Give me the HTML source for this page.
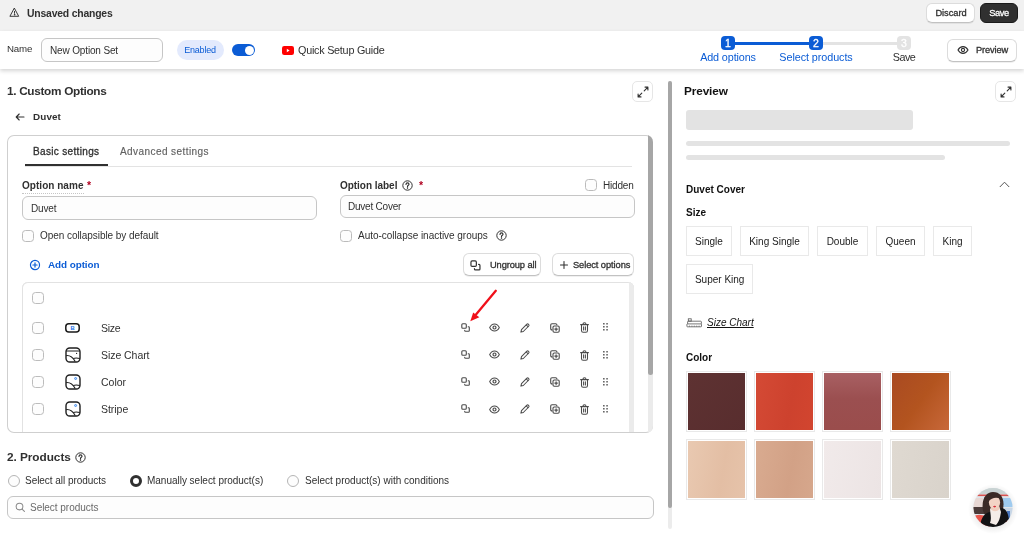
<!DOCTYPE html>
<html lang="en">
<head>
<meta charset="utf-8">
<title>New Option Set</title>
<style>
*{box-sizing:border-box;margin:0;padding:0}
html,body{width:1024px;height:540px;overflow:hidden;background:#fff}
body{font-family:"Liberation Sans",sans-serif;color:#303030;font-size:11px;position:relative}
.abs{position:absolute}
.t{position:absolute;white-space:nowrap;line-height:14px;will-change:transform}
.b{font-weight:700}
.m{-webkit-text-stroke:.3px currentColor}
#topbar{left:0;top:0;width:1024px;height:31px;background:#f1f1f1}
#bar2{left:0;top:31px;width:1024px;height:38px;background:#fff;box-shadow:0 1.5px 4px rgba(0,0,0,.17)}
.btn{position:absolute;background:#fff;border:1px solid #dcdcdc;border-bottom-color:#c2c2c2;border-radius:6px;box-shadow:0 1px 0 rgba(0,0,0,.06)}
.inp{position:absolute;background:#fdfdfd;border:1px solid #c6c6c6;border-radius:6px}
.cb{position:absolute;width:12px;height:12px;border:1px solid #bbb;border-radius:3.5px;background:#fdfdfd}
.radio{position:absolute;width:12px;height:12px;border:1px solid #b5b5b5;border-radius:50%;background:#fdfdfd}
.sw{position:absolute;width:60.8px;height:60.8px;border:1px solid #e9e9e9;padding:1.2px;background:#fff}
.sw i{display:block;width:100%;height:100%}
.opt{position:absolute;height:29.6px;border:1px solid #e9e9e9;background:#fff;font-size:10px;line-height:29.4px;text-align:center;color:#222}
.opt span{display:block;will-change:transform}
.ico{position:absolute}
</style>
</head>
<body>
<!-- top bar -->
<div class="abs" id="topbar"></div>
<svg class="ico" style="left:8.5px;top:7.2px" width="11" height="11" viewBox="0 0 11 11" fill="none" stroke="#303030" stroke-width=".95" stroke-linejoin="round" stroke-linecap="round"><path d="M5.5 1.4 L9.7 9.3 H1.3 Z"/><path d="M5.5 4.4 V6.3"/><circle cx="5.5" cy="7.8" r=".3" fill="#303030"/></svg>
<div class="t b" style="left:27px;top:6.6px;font-size:10.4px;--w:85.5;letter-spacing:-0.191px">Unsaved changes</div>
<div class="btn" style="left:925.8px;top:3.4px;width:48.8px;height:19.6px"></div>
<div class="t m" style="left:926.6px;top:6.2px;width:48px;text-align:center;font-size:9.3px;--w:31.2;letter-spacing:-0.045px">Discard</div>
<div class="abs" style="left:980px;top:3px;width:38px;height:19.5px;background:#303030;border-radius:6px;border:1px solid #1a1a1a"></div>
<div class="t m" style="left:980px;top:6px;width:38px;text-align:center;font-size:9.3px;color:#fff;--w:19.5;letter-spacing:-0.426px">Save</div>

<!-- second bar -->
<div class="abs" id="bar2"></div>
<div class="t" style="left:7px;top:42px;font-size:9.7px;--w:25.3;letter-spacing:-0.136px">Name</div>
<div class="inp" style="left:41px;top:38px;width:122px;height:24px"></div>
<div class="t" style="left:50px;top:43.6px;font-size:10px;--w:68;letter-spacing:-0.146px">New Option Set</div>
<div class="abs" style="left:177.3px;top:40px;width:46.5px;height:20px;border-radius:10px;background:#e3eafd"></div>
<div class="t" style="left:177px;top:43px;width:46px;text-align:center;font-size:9px;color:#0b5cd5;--w:31.7;letter-spacing:-0.190px">Enabled</div>
<div class="abs" style="left:232.4px;top:44.2px;width:22.8px;height:11.6px;border-radius:6px;background:#0b5cd5"></div>
<div class="abs" style="left:244.6px;top:45.5px;width:9px;height:9px;border-radius:50%;background:#fff"></div>
<svg class="ico" style="left:282px;top:46px" width="12" height="9" viewBox="0 0 12 9"><rect width="12" height="9" rx="2.2" fill="#f00"/><path d="M4.8 2.7 L7.6 4.5 L4.8 6.3 Z" fill="#fff"/></svg>
<div class="t" style="left:298px;top:43px;font-size:10.8px;--w:86.5;letter-spacing:-0.243px">Quick Setup Guide</div>

<!-- stepper -->
<div class="abs" style="left:728px;top:42px;width:88px;height:3px;background:#0b5cd5"></div>
<div class="abs" style="left:816px;top:42px;width:88px;height:3px;background:#e3e3e3"></div>
<div class="abs" style="left:721px;top:36px;width:14px;height:14px;border-radius:4px;background:#0b5cd5"></div>
<div class="abs" style="left:809px;top:36px;width:14px;height:14px;border-radius:4px;background:#0b5cd5"></div>
<div class="abs" style="left:897px;top:36px;width:14px;height:14px;border-radius:4px;background:#e3e3e3"></div>
<div class="t m" style="left:721px;top:36px;width:14px;text-align:center;font-size:10.5px;color:#fff">1</div>
<div class="t m" style="left:809px;top:36px;width:14px;text-align:center;font-size:10.5px;color:#fff">2</div>
<div class="t m" style="left:897px;top:36px;width:14px;text-align:center;font-size:10.5px;color:#fff">3</div>
<div class="t" style="left:678px;top:50px;width:100px;text-align:center;font-size:10.8px;color:#0b5cd5;--w:55.7;letter-spacing:-0.121px">Add options</div>
<div class="t" style="left:766px;top:50px;width:100px;text-align:center;font-size:10.8px;color:#0b5cd5;--w:73.3;letter-spacing:-0.075px">Select products</div>
<div class="t" style="left:854px;top:50px;width:100px;text-align:center;font-size:10.8px;--w:22.5;letter-spacing:-0.527px">Save</div>
<div class="btn" style="left:947.2px;top:38.6px;width:69.6px;height:23px"></div>
<svg class="ico" style="left:957px;top:44px" width="12" height="12" viewBox="0 0 12 12" fill="none" stroke="#303030" stroke-width="1.1"><path d="M1 6 C2.3 3.6 4 2.6 6 2.6 S9.7 3.6 11 6 C9.7 8.4 8 9.4 6 9.4 S2.3 8.4 1 6Z"/><circle cx="6" cy="6" r="1.6"/></svg>
<div class="t m" style="left:976px;top:43px;font-size:9.3px;color:#303030;--w:32.2;letter-spacing:-0.125px">Preview</div>

<!-- main left -->
<div class="t b" style="left:7.4px;top:84.3px;font-size:11.8px;--w:99.5;letter-spacing:-0.316px">1. Custom Options</div>
<div class="btn" style="left:632px;top:81px;width:21px;height:21px;border-color:#e6e6e6;border-radius:5px;box-shadow:none"></div>
<svg class="ico" style="left:636.6px;top:85.7px" width="12" height="12" viewBox="0 0 12 12" fill="none" stroke="#303030" stroke-width="1.1" stroke-linecap="round" stroke-linejoin="round"><path d="M8 1.1 H10.9 V4 M10.9 1.1 L7.2 4.8 M4 10.9 H1.1 V8 M1.1 10.9 L4.8 7.2"/></svg>
<svg class="ico" style="left:14.9px;top:112.2px" width="10" height="10" viewBox="0 0 10 10" fill="none" stroke="#303030" stroke-width="1.1" stroke-linecap="round" stroke-linejoin="round"><path d="M9 5 H1.2 M4.2 2 L1.2 5 L4.2 8"/></svg>
<div class="t b" style="left:33px;top:110.4px;font-size:9.9px;--w:28;letter-spacing:0.113px">Duvet</div>

<!-- card -->
<div class="abs" id="card" style="left:7px;top:135px;width:646.2px;height:298px;border-radius:7px;background:#fff;overflow:hidden;box-shadow:inset 0 0 0 1px #cfcfcf">
  <div class="abs" style="right:0;top:0;width:5px;height:298px;background:#ebebeb"></div>
  <div class="abs" style="right:0;top:0;width:5px;height:240px;background:#a6a6a6;border-radius:0 0 2.5px 2.5px"></div>
</div>
<div class="t m" style="left:33px;top:144.6px;font-size:10px;color:#303030;--w:66.4;letter-spacing:0.335px">Basic settings</div>
<div class="t m" style="left:119.5px;top:144.6px;font-size:10px;color:#616161;-webkit-text-stroke-width:.15px;--w:89;letter-spacing:0.428px">Advanced settings</div>
<div class="abs" style="left:25px;top:166px;width:607px;height:1px;background:#e3e3e3"></div>
<div class="abs" style="left:25px;top:164px;width:83px;height:2px;background:#303030"></div>

<div class="t b" style="left:22px;top:179px;font-size:10px;--w:61.5;letter-spacing:0.034px">Option name</div>
<div class="t b" style="left:87px;top:178px;font-size:10.5px;color:#b00020">*</div>
<div class="abs" style="left:22px;top:192.6px;width:61.5px;border-top:1px dotted #c6c6c6"></div>
<div class="inp" style="left:22px;top:196.4px;width:294.8px;height:23.2px"></div>
<div class="t" style="left:30.5px;top:202px;font-size:10px;--w:25.3;letter-spacing:-0.165px">Duvet</div>
<div class="cb" style="left:22px;top:230px"></div>
<div class="t" style="left:40px;top:229px;font-size:10px;--w:118.6;letter-spacing:-0.055px">Open collapsible by default</div>

<div class="t b" style="left:340px;top:179px;font-size:10px;--w:57.4;letter-spacing:-0.032px">Option label</div>
<svg class="ico help" style="left:402px;top:180px" width="11" height="11" viewBox="0 0 11 11" fill="none" stroke="#303030" stroke-width="1"><circle cx="5.5" cy="5.5" r="4.7"/><path d="M4 4.4 C4 3.4 4.7 2.9 5.5 2.9 S7 3.4 7 4.3 C7 5.3 5.5 5.3 5.5 6.5" stroke-linecap="round" stroke-width="1.15"/><circle cx="5.5" cy="8" r=".4" fill="#303030"/></svg>
<div class="t b" style="left:419px;top:178px;font-size:10.5px;color:#b00020">*</div>
<div class="cb" style="left:585px;top:179px"></div>
<div class="t" style="left:603.4px;top:179px;font-size:10px;--w:30.6;letter-spacing:-0.184px">Hidden</div>
<div class="inp" style="left:339.5px;top:195.4px;width:295px;height:22.6px"></div>
<div class="t" style="left:348px;top:200px;font-size:10px;--w:53.1;letter-spacing:-0.225px">Duvet Cover</div>
<div class="cb" style="left:340px;top:230px"></div>
<div class="t" style="left:358px;top:229px;font-size:10px;--w:129.7;letter-spacing:-0.032px">Auto-collapse inactive groups</div>
<svg class="ico help" style="left:496px;top:230px" width="11" height="11" viewBox="0 0 11 11" fill="none" stroke="#303030" stroke-width="1"><circle cx="5.5" cy="5.5" r="4.7"/><path d="M4 4.4 C4 3.4 4.7 2.9 5.5 2.9 S7 3.4 7 4.3 C7 5.3 5.5 5.3 5.5 6.5" stroke-linecap="round" stroke-width="1.15"/><circle cx="5.5" cy="8" r=".4" fill="#303030"/></svg>

<svg class="ico" style="left:29px;top:259px" width="12" height="12" viewBox="0 0 12 12" fill="none" stroke="#0b5cd5" stroke-width="1.2" stroke-linecap="round"><circle cx="6" cy="6" r="4.55"/><path d="M6 3.9 V8.1 M3.9 6 H8.1"/></svg>
<div class="t b" style="left:48px;top:258px;font-size:9.9px;color:#0b5cd5;--w:51.5;letter-spacing:-0.061px">Add option</div>

<div class="btn" style="left:462.8px;top:253.2px;width:78px;height:22.4px"></div>
<svg class="ico" style="left:470.3px;top:260px" width="12" height="12" viewBox="0 0 10 10" fill="none" stroke="#303030" stroke-width="1" stroke-linecap="round"><rect x=".8" y=".8" width="4.5" height="4.5" rx="1"/><path d="M7.2 3.7 H7.5 Q8.3 3.7 8.3 4.5 V7.5 Q8.3 8.3 7.5 8.3 H4.5 Q3.7 8.3 3.7 7.5 V7.2"/></svg>
<div class="t m" style="left:489.8px;top:258px;font-size:9.3px;--w:46.4;letter-spacing:-0.104px">Ungroup all</div>
<div class="btn" style="left:552.2px;top:253.2px;width:82.3px;height:22.4px"></div>
<svg class="ico" style="left:559.6px;top:261.2px" width="8" height="8" viewBox="0 0 8 8" stroke="#303030" stroke-width="1.05" stroke-linecap="round"><path d="M4 .5 V7.5 M.5 4 H7.5"/></svg>
<div class="t m" style="left:572.5px;top:258px;font-size:9.3px;--w:57.3;letter-spacing:-0.079px">Select options</div>

<!-- list -->
<div class="abs" id="list" style="left:22px;top:282px;width:612px;height:150px;border-radius:6px 6px 0 0;background:#fff;overflow:hidden;box-shadow:inset 0 1px 0 #e2e2e2,inset 1px 0 0 #e2e2e2,inset -1px 0 0 #e2e2e2">
  <div class="abs" style="right:0;top:0;width:5px;height:151px;background:#ebebeb"></div>
</div>

<!-- rows -->
<div class="cb" style="left:32px;top:291.5px;border-color:#bcbcbc"></div>
<div class="cb" style="left:32px;top:322.0px;border-color:#bcbcbc"></div>
<svg class="ico" style="left:65px;top:323.1px" width="15" height="10" viewBox="0 0 15 10"><rect x=".8" y=".8" width="13.4" height="8.2" rx="3" fill="#fff" stroke="#1a1a1a" stroke-width="1.5"/><text x="7.5" y="7" font-family="Liberation Sans,sans-serif" font-weight="700" font-size="5.8" fill="#1a73e8" text-anchor="middle">B</text></svg>
<div class="t" style="left:101px;top:320.8px;font-size:10.5px;--w:19.4;letter-spacing:-0.259px">Size</div>
<svg class="ico" style="left:460.5px;top:323.2px" width="10" height="10" viewBox="0 0 10 10" fill="none" stroke="#4a4a4a" stroke-width="1.1" stroke-linecap="round"><rect x=".8" y=".8" width="4.5" height="4.5" rx="1"/><path d="M7.2 3.7 H7.5 Q8.3 3.7 8.3 4.5 V7.5 Q8.3 8.3 7.5 8.3 H4.5 Q3.7 8.3 3.7 7.5 V7.2"/></svg>
<svg class="ico" style="left:489px;top:323.3px" width="11" height="9" viewBox="0 0 11 9" fill="none" stroke="#4a4a4a" stroke-width="1.05"><path d="M.7 4.5 C1.8 2.2 3.5 1 5.5 1 S9.2 2.2 10.3 4.5 C9.2 6.8 7.5 8 5.5 8 S1.8 6.8 .7 4.5Z"/><circle cx="5.5" cy="4.5" r="1.5" stroke-width="1.2"/></svg>
<svg class="ico" style="left:519.5px;top:322.8px" width="10" height="10" viewBox="0 0 10 10" fill="none" stroke="#4a4a4a" stroke-width="1.05" stroke-linejoin="round" stroke-linecap="round"><path d="M.9 9.1 L1.5 6.6 L6.9 1.2 Q7.7 .5 8.5 1.3 Q9.4 2.2 8.7 3 L3.3 8.5 Z"/><path d="M6.3 2 L8 3.7"/></svg>
<svg class="ico" style="left:549.8px;top:323.0px" width="10" height="10" viewBox="0 0 10 10" fill="none" stroke="#4a4a4a" stroke-width="1.1" stroke-linecap="round"><rect x="3" y="3" width="6.2" height="6.2" rx="1.2"/><path d="M6.1 4.8 V7.4 M4.8 6.1 H7.4" stroke-width="1.1"/><path d="M1.9 6.9 Q.7 6.9 .7 5.6 V2 Q.7 .7 2 .7 H5.6 Q6.9 .7 6.9 1.7"/></svg>
<svg class="ico" style="left:579.8px;top:322.4px" width="9" height="11" viewBox="0 0 9 11" fill="none" stroke="#4a4a4a" stroke-width="1.05" stroke-linecap="round"><path d="M.6 2.6 H8.4"/><path d="M3 2.4 Q3 .7 4.5 .7 T6 2.4"/><path d="M1.5 2.8 V8.6 Q1.5 10.3 3.1 10.3 H5.9 Q7.5 10.3 7.5 8.6 V2.8"/><path d="M3.6 4.8 V8 M5.4 4.8 V8"/></svg>
<svg class="ico" style="left:602.8px;top:323.4px" width="5" height="8" viewBox="0 0 5 8" fill="#4a4a4a"><rect x="0.1" y="0.1" width="1.5" height="1.5" rx=".3"/><rect x="0.1" y="3.1" width="1.5" height="1.5" rx=".3"/><rect x="0.1" y="6.1" width="1.5" height="1.5" rx=".3"/><rect x="3.3" y="0.1" width="1.5" height="1.5" rx=".3"/><rect x="3.3" y="3.1" width="1.5" height="1.5" rx=".3"/><rect x="3.3" y="6.1" width="1.5" height="1.5" rx=".3"/></svg>
<div class="cb" style="left:32px;top:349.1px;border-color:#bcbcbc"></div>
<svg class="ico" style="left:65px;top:346.9px" width="16" height="16" viewBox="0 0 16 16" fill="none" stroke="#1f1f1f" stroke-width="1.3"><rect x="1" y="1" width="14" height="14" rx="3.8" stroke-width="1.4"/><path d="M1.2 8.6 C5 8.2 8 10.5 10.2 14.6" stroke-width="1.1"/><path d="M8.3 11.6 C10.3 10.6 12.5 10.8 14.8 11.6" stroke-width="1.1"/><path d="M1 4 H15" stroke-width="1"/><circle cx="11.6" cy="6.4" r=".6" fill="#1f1f1f" stroke="none"/></svg>
<div class="t" style="left:101px;top:347.9px;font-size:10.5px;--w:48.5;letter-spacing:-0.053px">Size Chart</div>
<svg class="ico" style="left:460.5px;top:350.2px" width="10" height="10" viewBox="0 0 10 10" fill="none" stroke="#4a4a4a" stroke-width="1.1" stroke-linecap="round"><rect x=".8" y=".8" width="4.5" height="4.5" rx="1"/><path d="M7.2 3.7 H7.5 Q8.3 3.7 8.3 4.5 V7.5 Q8.3 8.3 7.5 8.3 H4.5 Q3.7 8.3 3.7 7.5 V7.2"/></svg>
<svg class="ico" style="left:489px;top:350.4px" width="11" height="9" viewBox="0 0 11 9" fill="none" stroke="#4a4a4a" stroke-width="1.05"><path d="M.7 4.5 C1.8 2.2 3.5 1 5.5 1 S9.2 2.2 10.3 4.5 C9.2 6.8 7.5 8 5.5 8 S1.8 6.8 .7 4.5Z"/><circle cx="5.5" cy="4.5" r="1.5" stroke-width="1.2"/></svg>
<svg class="ico" style="left:519.5px;top:349.9px" width="10" height="10" viewBox="0 0 10 10" fill="none" stroke="#4a4a4a" stroke-width="1.05" stroke-linejoin="round" stroke-linecap="round"><path d="M.9 9.1 L1.5 6.6 L6.9 1.2 Q7.7 .5 8.5 1.3 Q9.4 2.2 8.7 3 L3.3 8.5 Z"/><path d="M6.3 2 L8 3.7"/></svg>
<svg class="ico" style="left:549.8px;top:350.1px" width="10" height="10" viewBox="0 0 10 10" fill="none" stroke="#4a4a4a" stroke-width="1.1" stroke-linecap="round"><rect x="3" y="3" width="6.2" height="6.2" rx="1.2"/><path d="M6.1 4.8 V7.4 M4.8 6.1 H7.4" stroke-width="1.1"/><path d="M1.9 6.9 Q.7 6.9 .7 5.6 V2 Q.7 .7 2 .7 H5.6 Q6.9 .7 6.9 1.7"/></svg>
<svg class="ico" style="left:579.8px;top:349.5px" width="9" height="11" viewBox="0 0 9 11" fill="none" stroke="#4a4a4a" stroke-width="1.05" stroke-linecap="round"><path d="M.6 2.6 H8.4"/><path d="M3 2.4 Q3 .7 4.5 .7 T6 2.4"/><path d="M1.5 2.8 V8.6 Q1.5 10.3 3.1 10.3 H5.9 Q7.5 10.3 7.5 8.6 V2.8"/><path d="M3.6 4.8 V8 M5.4 4.8 V8"/></svg>
<svg class="ico" style="left:602.8px;top:350.5px" width="5" height="8" viewBox="0 0 5 8" fill="#4a4a4a"><rect x="0.1" y="0.1" width="1.5" height="1.5" rx=".3"/><rect x="0.1" y="3.1" width="1.5" height="1.5" rx=".3"/><rect x="0.1" y="6.1" width="1.5" height="1.5" rx=".3"/><rect x="3.3" y="0.1" width="1.5" height="1.5" rx=".3"/><rect x="3.3" y="3.1" width="1.5" height="1.5" rx=".3"/><rect x="3.3" y="6.1" width="1.5" height="1.5" rx=".3"/></svg>
<div class="cb" style="left:32px;top:376.1px;border-color:#bcbcbc"></div>
<svg class="ico" style="left:65px;top:373.9px" width="16" height="16" viewBox="0 0 16 16" fill="none" stroke="#1f1f1f" stroke-width="1.3"><rect x="1" y="1" width="14" height="14" rx="3.8" stroke-width="1.4"/><path d="M1.2 8.6 C5 8.2 8 10.5 10.2 14.6" stroke-width="1.1"/><path d="M8.3 11.6 C10.3 10.6 12.5 10.8 14.8 11.6" stroke-width="1.1"/><circle cx="10.6" cy="4.5" r="1" fill="#cfe2fb" stroke="#2b7de9" stroke-width=".85"/></svg>
<div class="t" style="left:101px;top:374.9px;font-size:10.5px;--w:25.1;letter-spacing:0.001px">Color</div>
<svg class="ico" style="left:460.5px;top:377.3px" width="10" height="10" viewBox="0 0 10 10" fill="none" stroke="#4a4a4a" stroke-width="1.1" stroke-linecap="round"><rect x=".8" y=".8" width="4.5" height="4.5" rx="1"/><path d="M7.2 3.7 H7.5 Q8.3 3.7 8.3 4.5 V7.5 Q8.3 8.3 7.5 8.3 H4.5 Q3.7 8.3 3.7 7.5 V7.2"/></svg>
<svg class="ico" style="left:489px;top:377.4px" width="11" height="9" viewBox="0 0 11 9" fill="none" stroke="#4a4a4a" stroke-width="1.05"><path d="M.7 4.5 C1.8 2.2 3.5 1 5.5 1 S9.2 2.2 10.3 4.5 C9.2 6.8 7.5 8 5.5 8 S1.8 6.8 .7 4.5Z"/><circle cx="5.5" cy="4.5" r="1.5" stroke-width="1.2"/></svg>
<svg class="ico" style="left:519.5px;top:376.9px" width="10" height="10" viewBox="0 0 10 10" fill="none" stroke="#4a4a4a" stroke-width="1.05" stroke-linejoin="round" stroke-linecap="round"><path d="M.9 9.1 L1.5 6.6 L6.9 1.2 Q7.7 .5 8.5 1.3 Q9.4 2.2 8.7 3 L3.3 8.5 Z"/><path d="M6.3 2 L8 3.7"/></svg>
<svg class="ico" style="left:549.8px;top:377.1px" width="10" height="10" viewBox="0 0 10 10" fill="none" stroke="#4a4a4a" stroke-width="1.1" stroke-linecap="round"><rect x="3" y="3" width="6.2" height="6.2" rx="1.2"/><path d="M6.1 4.8 V7.4 M4.8 6.1 H7.4" stroke-width="1.1"/><path d="M1.9 6.9 Q.7 6.9 .7 5.6 V2 Q.7 .7 2 .7 H5.6 Q6.9 .7 6.9 1.7"/></svg>
<svg class="ico" style="left:579.8px;top:376.5px" width="9" height="11" viewBox="0 0 9 11" fill="none" stroke="#4a4a4a" stroke-width="1.05" stroke-linecap="round"><path d="M.6 2.6 H8.4"/><path d="M3 2.4 Q3 .7 4.5 .7 T6 2.4"/><path d="M1.5 2.8 V8.6 Q1.5 10.3 3.1 10.3 H5.9 Q7.5 10.3 7.5 8.6 V2.8"/><path d="M3.6 4.8 V8 M5.4 4.8 V8"/></svg>
<svg class="ico" style="left:602.8px;top:377.5px" width="5" height="8" viewBox="0 0 5 8" fill="#4a4a4a"><rect x="0.1" y="0.1" width="1.5" height="1.5" rx=".3"/><rect x="0.1" y="3.1" width="1.5" height="1.5" rx=".3"/><rect x="0.1" y="6.1" width="1.5" height="1.5" rx=".3"/><rect x="3.3" y="0.1" width="1.5" height="1.5" rx=".3"/><rect x="3.3" y="3.1" width="1.5" height="1.5" rx=".3"/><rect x="3.3" y="6.1" width="1.5" height="1.5" rx=".3"/></svg>
<div class="cb" style="left:32px;top:403.2px;border-color:#bcbcbc"></div>
<svg class="ico" style="left:65px;top:401.0px" width="16" height="16" viewBox="0 0 16 16" fill="none" stroke="#1f1f1f" stroke-width="1.3"><rect x="1" y="1" width="14" height="14" rx="3.8" stroke-width="1.4"/><path d="M1.2 8.6 C5 8.2 8 10.5 10.2 14.6" stroke-width="1.1"/><path d="M8.3 11.6 C10.3 10.6 12.5 10.8 14.8 11.6" stroke-width="1.1"/><circle cx="10.6" cy="4.5" r="1" fill="#cfe2fb" stroke="#2b7de9" stroke-width=".85"/></svg>
<div class="t" style="left:101px;top:402.0px;font-size:10.5px;--w:27.2;letter-spacing:-0.040px">Stripe</div>
<svg class="ico" style="left:460.5px;top:404.4px" width="10" height="10" viewBox="0 0 10 10" fill="none" stroke="#4a4a4a" stroke-width="1.1" stroke-linecap="round"><rect x=".8" y=".8" width="4.5" height="4.5" rx="1"/><path d="M7.2 3.7 H7.5 Q8.3 3.7 8.3 4.5 V7.5 Q8.3 8.3 7.5 8.3 H4.5 Q3.7 8.3 3.7 7.5 V7.2"/></svg>
<svg class="ico" style="left:489px;top:404.5px" width="11" height="9" viewBox="0 0 11 9" fill="none" stroke="#4a4a4a" stroke-width="1.05"><path d="M.7 4.5 C1.8 2.2 3.5 1 5.5 1 S9.2 2.2 10.3 4.5 C9.2 6.8 7.5 8 5.5 8 S1.8 6.8 .7 4.5Z"/><circle cx="5.5" cy="4.5" r="1.5" stroke-width="1.2"/></svg>
<svg class="ico" style="left:519.5px;top:404.0px" width="10" height="10" viewBox="0 0 10 10" fill="none" stroke="#4a4a4a" stroke-width="1.05" stroke-linejoin="round" stroke-linecap="round"><path d="M.9 9.1 L1.5 6.6 L6.9 1.2 Q7.7 .5 8.5 1.3 Q9.4 2.2 8.7 3 L3.3 8.5 Z"/><path d="M6.3 2 L8 3.7"/></svg>
<svg class="ico" style="left:549.8px;top:404.2px" width="10" height="10" viewBox="0 0 10 10" fill="none" stroke="#4a4a4a" stroke-width="1.1" stroke-linecap="round"><rect x="3" y="3" width="6.2" height="6.2" rx="1.2"/><path d="M6.1 4.8 V7.4 M4.8 6.1 H7.4" stroke-width="1.1"/><path d="M1.9 6.9 Q.7 6.9 .7 5.6 V2 Q.7 .7 2 .7 H5.6 Q6.9 .7 6.9 1.7"/></svg>
<svg class="ico" style="left:579.8px;top:403.6px" width="9" height="11" viewBox="0 0 9 11" fill="none" stroke="#4a4a4a" stroke-width="1.05" stroke-linecap="round"><path d="M.6 2.6 H8.4"/><path d="M3 2.4 Q3 .7 4.5 .7 T6 2.4"/><path d="M1.5 2.8 V8.6 Q1.5 10.3 3.1 10.3 H5.9 Q7.5 10.3 7.5 8.6 V2.8"/><path d="M3.6 4.8 V8 M5.4 4.8 V8"/></svg>
<svg class="ico" style="left:602.8px;top:404.6px" width="5" height="8" viewBox="0 0 5 8" fill="#4a4a4a"><rect x="0.1" y="0.1" width="1.5" height="1.5" rx=".3"/><rect x="0.1" y="3.1" width="1.5" height="1.5" rx=".3"/><rect x="0.1" y="6.1" width="1.5" height="1.5" rx=".3"/><rect x="3.3" y="0.1" width="1.5" height="1.5" rx=".3"/><rect x="3.3" y="3.1" width="1.5" height="1.5" rx=".3"/><rect x="3.3" y="6.1" width="1.5" height="1.5" rx=".3"/></svg>
<svg class="ico" style="left:460px;top:285px" width="45" height="42" viewBox="460 285 45 42"><path d="M495.8 290.8 L476 314.4" stroke="#f0101a" stroke-width="2.3" stroke-linecap="round"/><path d="M470.3 321.3 L473.2 312.6 L479.3 317.2 Z" fill="#f0101a"/></svg>
<!-- /rows -->

<!-- products -->
<div class="t b" style="left:7px;top:450px;font-size:11.8px;--w:63.8;letter-spacing:-0.041px">2. Products</div>
<svg class="ico help" style="left:75px;top:452px" width="11" height="11" viewBox="0 0 11 11" fill="none" stroke="#303030" stroke-width="1"><circle cx="5.5" cy="5.5" r="4.7"/><path d="M4 4.4 C4 3.4 4.7 2.9 5.5 2.9 S7 3.4 7 4.3 C7 5.3 5.5 5.3 5.5 6.5" stroke-linecap="round" stroke-width="1.15"/><circle cx="5.5" cy="8" r=".4" fill="#303030"/></svg>
<div class="radio" style="left:8px;top:474.6px"></div>
<div class="t" style="left:25.2px;top:474px;font-size:10px;--w:81;letter-spacing:-0.038px">Select all products</div>
<div class="radio" style="left:130px;top:474.6px;border:3.5px solid #303030;background:#fff"></div>
<div class="t" style="left:147.4px;top:474px;font-size:10px;--w:116.2;letter-spacing:-0.020px">Manually select product(s)</div>
<div class="radio" style="left:287px;top:474.6px"></div>
<div class="t" style="left:304.8px;top:474px;font-size:10px;--w:144.1;letter-spacing:0.004px">Select product(s) with conditions</div>
<div class="inp" style="left:7px;top:496.2px;width:646.6px;height:22.4px"></div>
<svg class="ico" style="left:14.6px;top:502.4px" width="10.5" height="10.5" viewBox="0 0 10 10" fill="none" stroke="#8a8a8a" stroke-width="1" stroke-linecap="round"><circle cx="4.3" cy="4.3" r="3.2"/><path d="M6.7 6.7 L9 9"/></svg>
<div class="t" style="left:30px;top:501px;font-size:10px;color:#6a6a6a;--w:68.4;letter-spacing:-0.036px">Select products</div>

<!-- divider scrollbar -->
<div class="abs" style="left:667.8px;top:81px;width:4.2px;height:447.5px;background:#ececec;border-radius:2.1px"></div>
<div class="abs" style="left:667.8px;top:81px;width:4.2px;height:426.7px;background:#a6a6a6;border-radius:2.1px"></div>

<!-- preview panel -->
<div class="t b" style="left:684px;top:84.4px;font-size:11.8px;color:#111;--w:43.8;letter-spacing:-0.116px">Preview</div>
<div class="btn" style="left:995.3px;top:81px;width:21px;height:21px;border-color:#e6e6e6;border-radius:5px;box-shadow:none"></div>
<svg class="ico" style="left:999.8px;top:85.7px" width="12" height="12" viewBox="0 0 12 12" fill="none" stroke="#303030" stroke-width="1.1" stroke-linecap="round" stroke-linejoin="round"><path d="M8 1.1 H10.9 V4 M10.9 1.1 L7.2 4.8 M4 10.9 H1.1 V8 M1.1 10.9 L4.8 7.2"/></svg>
<div class="abs" style="left:686px;top:110px;width:227px;height:20px;border-radius:3px;background:#e3e3e3"></div>
<div class="abs" style="left:686px;top:141px;width:324px;height:5px;border-radius:3px;background:#e3e3e3"></div>
<div class="abs" style="left:686px;top:155px;width:259px;height:5px;border-radius:3px;background:#e3e3e3"></div>
<div class="t b" style="left:685.7px;top:182.5px;font-size:10px;color:#111">Duvet Cover</div>
<svg class="ico" style="left:999px;top:181.4px" width="11" height="7" viewBox="0 0 11 7" fill="none" stroke="#555" stroke-width="1"><path d="M.8 6 L5.5 1.2 L10.2 6"/></svg>
<div class="t b" style="left:685.7px;top:205.6px;font-size:10px;color:#111">Size</div>
<div class="opt" style="left:686px;top:226px;width:46px"><span>Single</span></div>
<div class="opt" style="left:740px;top:226px;width:69px"><span>King Single</span></div>
<div class="opt" style="left:817px;top:226px;width:51px"><span>Double</span></div>
<div class="opt" style="left:876px;top:226px;width:49px"><span>Queen</span></div>
<div class="opt" style="left:933px;top:226px;width:39px"><span>King</span></div>
<div class="opt" style="left:686px;top:264.2px;width:67.4px"><span>Super King</span></div>
<svg class="ico" style="left:686px;top:318px" width="17" height="10" viewBox="0 0 17 10" fill="none" stroke="#555" stroke-width=".8"><rect x=".9" y="5.9" width="14.6" height="2.9" rx=".5"/><path d="M1.6 5.8 V3.9 Q1.6 3.2 2.3 3.2 H14.6 Q15.4 3.2 15.4 4 V5.8"/><rect x="2.3" y=".8" width="2.9" height="2.3"/><path d="M3.5 8.6 V7.6 M5.9 8.6 V7.6 M8.3 8.6 V7.6 M10.7 8.6 V7.6 M13.1 8.6 V7.6" stroke-width=".7"/></svg>
<div class="t" style="left:707.2px;top:316.2px;font-size:10px;font-style:italic;text-decoration:underline;color:#111">Size Chart</div>
<div class="t b" style="left:685.7px;top:350.8px;font-size:10px;color:#111">Color</div>
<div class="sw" style="left:686px;top:371px"><i style="background:linear-gradient(135deg,#5e3232,#582d2e)"></i></div>
<div class="sw" style="left:754px;top:371px"><i style="background:linear-gradient(100deg,#d44a35,#cd422e 60%,#d2452f)"></i></div>
<div class="sw" style="left:822px;top:371px"><i style="background:linear-gradient(180deg,#a86063,#9b4f50 45%,#9a4d4c)"></i></div>
<div class="sw" style="left:890px;top:371px"><i style="background:linear-gradient(125deg,#a94a22,#b3541f 50%,#c8683a)"></i></div>
<div class="sw" style="left:686px;top:439px"><i style="background:linear-gradient(100deg,#e9c9b1,#e3bea4 60%,#e6c3aa)"></i></div>
<div class="sw" style="left:754px;top:439px"><i style="background:linear-gradient(100deg,#d9ab90,#d2a186 60%,#d6a78c)"></i></div>
<div class="sw" style="left:822px;top:439px"><i style="background:linear-gradient(100deg,#f1eaea,#ece4e4)"></i></div>
<div class="sw" style="left:890px;top:439px"><i style="background:linear-gradient(100deg,#dfd9d1,#d9d3cb)"></i></div>
<!-- avatar -->
<svg class="ico" style="left:966px;top:481px" width="54" height="54" viewBox="0 0 54 54">
<defs><clipPath id="avc"><circle cx="27" cy="26.5" r="19.5"/></clipPath><radialGradient id="avs"><stop offset=".72" stop-color="#000" stop-opacity=".07"/><stop offset="1" stop-color="#000" stop-opacity="0"/></radialGradient></defs>
<circle cx="27" cy="28" r="25" fill="url(#avs)"/>
<g clip-path="url(#avc)">
<rect x="6" y="6" width="42" height="42" fill="#dfe5ea"/>
<rect x="6" y="13.5" width="42" height="1.6" fill="#d9534f"/>
<rect x="6" y="7" width="42" height="6" fill="#c9d3d3"/>
<rect x="36" y="17" width="12" height="9" fill="#9fcbef"/>
<rect x="38" y="27" width="10" height="12" fill="#c7d6e6"/>
<rect x="41" y="30" width="3" height="9" fill="#4a78c0"/>
<rect x="6" y="17" width="11" height="12" fill="#e7d7d3"/>
<rect x="7" y="26" width="12" height="7" fill="#4a3a38"/>
<path d="M6 36 Q14 31 22 37 L24 48 H6 Z" fill="#e9564c"/>
<path d="M40 40 L48 38 V48 H38 Z" fill="#e9564c"/>
<path d="M17 30 C15 18 20 11 27 11 C35 11 39 18 37 28 L35 34 H19 Z" fill="#3b2a26"/>
<ellipse cx="28.5" cy="21.5" rx="5.6" ry="6.8" fill="#f3d3c5"/>
<path d="M22 17 C24 12 33 12 35 18 C31 16 26 16 22 21 Z" fill="#3b2a26"/>
<ellipse cx="28.6" cy="25.6" rx="1.5" ry=".8" fill="#d6303a"/>
<path d="M14 48 C14 36 20 30 26 31 L36 27 C42 28 44 38 43 48 Z" fill="#121214"/>
<path d="M24 27 C27 30 31 29 33 25 L35 31 C34 37 33 41 30 44 L24 42 C26 37 24 32 24 27 Z" fill="#f4ece8"/>
<path d="M25 25 C27 29 31 28 33 24 L33.5 28 C31 31 27 31 25 28 Z" fill="#f0cdbd"/>
</g>
</svg>
</body>
</html>
